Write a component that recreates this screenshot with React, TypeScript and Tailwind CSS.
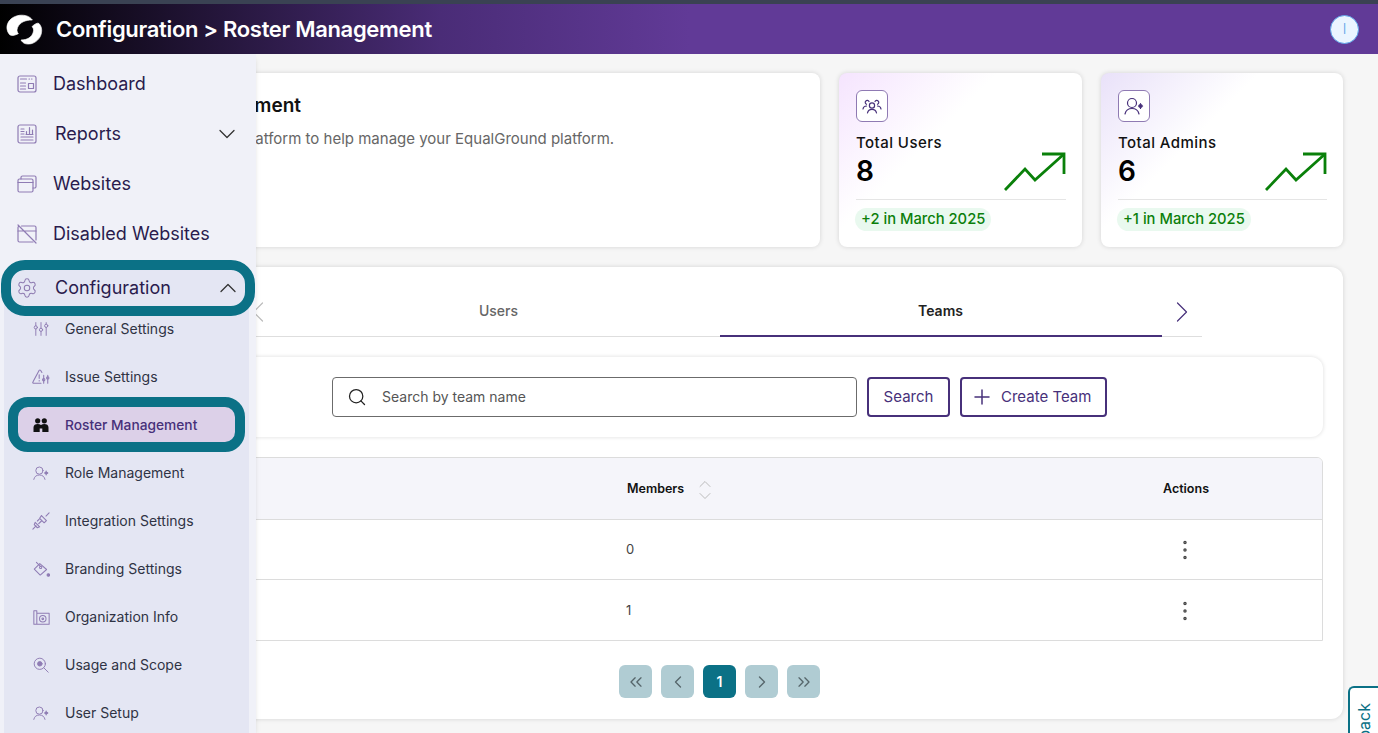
import { ChevronDown, ChevronLeft, ChevronRight, ChevronUp, ChevronsLeft, ChevronsRight, EllipsisVertical, Plus, Search, Settings } from "lucide-react";
import type { ReactNode } from "react";

function Ico({ size = 20, children, className = "text-[#8f7cb4]" }: { size?: number; children: ReactNode; className?: string }) {
  return (
    <svg width={size} height={size} viewBox="0 0 20 20" fill="none" stroke="currentColor" strokeWidth="1.2" strokeLinecap="round" strokeLinejoin="round" className={`shrink-0 ${className}`}>
      {children}
    </svg>
  );
}

const DashboardIcon = () => (
  <Ico>
    <rect x="1" y="2" width="18" height="16" rx="2" />
    <path d="M3.500 5h6M12 5h.5M14.500 5h.5M3.500 9h5M3.500 12h5M3.500 15h5" />
    <rect x="11.500" y="9.500" width="5" height="5" />
  </Ico>
);
const ReportsIcon = () => (
  <Ico>
    <rect x="1" y="1" width="18" height="18" rx="2" />
    <path d="M4 5h3M4 7.500h3M4 10h3M4 13h12M4 16h12M9.500 10.500V7.500M12.500 10.500V3.500M15.500 10.500V6M9 10.500h7" />
  </Ico>
);
const WebsitesIcon = () => (
  <Ico>
    <path d="M4 5V3.500A1.500 1.500 0 0 1 5.500 2h12A1.500 1.500 0 0 1 19 3.500v9a1.500 1.500 0 0 1-1.500 1.500H16" />
    <rect x="1" y="5" width="15" height="13" rx="1.500" />
    <path d="M1 8.500h15" />
  </Ico>
);
const DisabledIcon = () => (
  <Ico>
    <path d="M4.500 2H17.500A1.500 1.500 0 0 1 19 3.500V16M1.500 2.500A1.500 1.500 0 0 0 1 3.500v13A1.500 1.500 0 0 0 2.500 18H16" />
    <path d="M1 7h18M1 1l18 18" />
  </Ico>
);
const SlidersIcon = () => (
  <Ico size={16}>
    <path d="M3.500 2v4M3.500 10v8M10 2v7M10 13v5M16.500 2v2M16.500 8v10" />
    <circle cx="3.500" cy="8" r="2" />
    <circle cx="10" cy="11" r="2" />
    <circle cx="16.500" cy="6" r="2" />
  </Ico>
);
const IssueIcon = () => (
  <Ico size={18}>
    <path d="M11 5 9.500 2.500a1 1 0 0 0-1.500 0L1 15.500a1 1 0 0 0 1 1.500h8" />
    <path d="M8 7.500v4M8 14v.5M13 8v9M17.500 8v9" />
    <circle cx="13" cy="13" r="1.300" />
    <circle cx="17.500" cy="11" r="1.300" />
  </Ico>
);
const RoleIcon = ({ size = 16, className }: { size?: number; className?: string }) => (
  <Ico size={size} className={className}>
    <circle cx="8" cy="7" r="4.500" />
    <path d="M1 18c.8-3.500 3-5.500 7-5.500s6.200 2 7 5.500" />
    <circle cx="16.500" cy="10" r="1.500" fill="currentColor" />
    <path d="M16.500 7.500v.5M16.500 12v.5M14.500 10h.3M18.300 10h.3" />
  </Ico>
);
const PlugIcon = () => (
  <Ico size={18}>
    <path d="M1 19l3.500-3.500M19 1l-3.500 3.500" />
    <path d="M3.500 11.500 8.500 16.500 6 17.500 2.500 14 3.500 11.500ZM10.500 4 16 9.500M8.500 7l5 5M10.500 4l-2 3M16 9.500l-2.500 2.500" />
    <path d="M10.500 10l-3 3M8 8l-2 2" />
  </Ico>
);
const BucketIcon = () => (
  <Ico size={17}>
    <path d="M8 3 1.500 9.500l7 7L16 10 8 3Z" />
    <path d="M4 1.500l5 5" />
    <circle cx="9" cy="7.500" r="1.300" />
    <circle cx="18" cy="16.500" r="1.500" fill="currentColor" />
  </Ico>
);
const OrgIcon = () => (
  <Ico size={17}>
    <path d="M1 18V2h3.500v3H19v13H1ZM4.500 5v13" />
    <circle cx="11.500" cy="11.500" r="3.800" />
    <circle cx="11.500" cy="11.500" r="1" />
  </Ico>
);
const ScopeIcon = () => (
  <Ico size={16}>
    <circle cx="8.500" cy="8.500" r="7" />
    <circle cx="8.500" cy="8.500" r="2.800" fill="currentColor" />
    <path d="M13.500 13.500 19 19" />
  </Ico>
);
const UsersIcon = () => (
  <Ico size={20} className="text-[#47307a]">
    <circle cx="10" cy="9.500" r="2.600" />
    <path d="M5.500 17c.5-2.500 2-3.700 4.500-3.700s4 1.200 4.500 3.700M7 5.500A2 2 0 1 0 4.500 8.300M13 5.500a2 2 0 1 1 2.500 2.800M1 13c.3-2 1.500-3 3.500-3M19 13c-.3-2-1.500-3-3.500-3" />
  </Ico>
);
const RosterIcon = () => (
  <svg width="16" height="16" viewBox="0 0 16 16" fill="#111" className="shrink-0">
    <circle cx="4.700" cy="3.800" r="2.600" />
    <circle cx="11.300" cy="3.800" r="2.600" />
    <path d="M.500 15v-4.500C.500 8 2.300 7 4.700 7c1.300 0 2.400.3 3.300 1 .9-.7 2-1 3.300-1 2.400 0 4.200 1 4.200 3.500V15H9.300v-3.500H6.700V15H.500Z" />
  </svg>
);

const subItems = [
  { label: "General Settings", icon: <SlidersIcon /> },
  { label: "Issue Settings", icon: <IssueIcon /> },
  { label: "Roster Management", icon: <RosterIcon />, active: true },
  { label: "Role Management", icon: <RoleIcon /> },
  { label: "Integration Settings", icon: <PlugIcon /> },
  { label: "Branding Settings", icon: <BucketIcon /> },
  { label: "Organization Info", icon: <OrgIcon /> },
  { label: "Usage and Scope", icon: <ScopeIcon /> },
  { label: "User Setup", icon: <RoleIcon /> },
];

function Sidebar() {
  return (
    <aside className="absolute top-0 bottom-0 left-0 z-20 w-64 overflow-hidden bg-[#f0f1f8] pt-[5px] shadow-md">
      <div className="flex h-[50px] items-center gap-4 pl-[17px] text-lg text-[#2a1b4d]">
        <DashboardIcon />
        Dashboard
      </div>
      <div className="flex h-[50px] items-center pl-[17px] pr-[15px] text-lg text-[#2a1b4d]">
        <ReportsIcon />
        <span className="ml-[18px] flex-1">Reports</span>
        <ChevronDown size={28} strokeWidth={1.1} className="text-[#333]" />
      </div>
      <div className="flex h-[50px] items-center gap-4 pl-[17px] text-lg text-[#2a1b4d]">
        <WebsitesIcon />
        Websites
      </div>
      <div className="flex h-[50px] items-center gap-4 pl-[17px] text-lg text-[#2a1b4d]">
        <DisabledIcon />
        Disabled Websites
      </div>
      <div className="relative z-10 mx-px mt-px flex h-14 w-[254px] items-center rounded-[24px] border-[10px] border-[#0b7186] bg-[#e4e6f3] pl-[5px] pr-[3px] text-lg text-[#2a1b4d]">
        <Settings size={22} strokeWidth={1.1} className="text-[#8d7ab0]" />
        <span className="ml-[17px] flex-1">Configuration</span>
        <ChevronUp size={28} strokeWidth={1.1} className="text-[#333]" />
      </div>
      <div className="mx-1 -mt-[11px] h-[480px] w-[245px] bg-[#e4e6f3]">
        {subItems.map((item) =>
          item.active ? (
            <div key={item.label} className="flex h-12 items-center">
              <div className="relative z-10 ml-1 flex h-[55px] w-[237px] shrink-0 -translate-y-px items-center rounded-[20px] border-[10px] border-[#0b7186] bg-[#dcd0e8] pt-0.5 pl-[15px] text-[13.75px] font-medium text-[#47307a]">
                <RosterIcon />
                <span className="ml-4">{item.label}</span>
              </div>
            </div>
          ) : (
            <div key={item.label} className="flex h-12 items-center pl-[29px] text-sm text-[#2f3344]">
              <span className="flex w-4 justify-center">{item.icon}</span>
              <span className="ml-4">{item.label}</span>
            </div>
          ),
        )}
      </div>
    </aside>
  );
}

function TrendArrow() {
  return (
    <svg width="62" height="40" viewBox="0 0 62 40" fill="none" stroke="#0a800a" strokeWidth="2.800" className="shrink-0">
      <path d="M1 38 21 17l10 11L60 2" />
      <path d="M38 2h22v20" />
    </svg>
  );
}

function StatCard({ label, value, change, icon, gradient, width }: { label: string; value: string; change: string; icon: ReactNode; gradient: string; width: string }) {
  return (
    <div className={`rounded-lg bg-white pt-[17px] pr-4 pl-[17px] shadow-[0_0_5px_rgba(0,0,0,0.14)] ${width} ${gradient}`}>
      <div className="flex h-8 w-8 items-center justify-center rounded-md border border-[#8f7ab3] bg-white">{icon}</div>
      <div className="flex h-[78px] justify-between border-b border-[#e5e5e5]">
        <div>
          <div className="mt-[10px] text-[15px] font-medium tracking-[0.45px] text-[#111]">{label}</div>
          <div className="-mt-0.5 text-[28px] leading-9 font-semibold text-black">{value}</div>
        </div>
        <div className="self-end pb-[7px]">
          <TrendArrow />
        </div>
      </div>
      <div className="mt-2 -ml-px inline-block rounded-full bg-[#e9f9ef] px-1.5 text-[14.75px] leading-[23px] font-medium text-[#0b7f0b]">{change}</div>
    </div>
  );
}

function PageButton({ children, active = false }: { children: ReactNode; active?: boolean }) {
  return (
    <div className={`flex h-[33px] w-[33px] items-center justify-center rounded-md text-sm font-semibold ${active ? "bg-[#0b7186] text-white" : "bg-[#b0ccd3] text-[#56666b]"}`}>
      {children}
    </div>
  );
}

function Row({ count, height }: { count: string; height: string }) {
  return (
    <div className={`grid grid-cols-[498px_1fr_274px] items-center border-t border-[#dcdcdc] text-[13px] text-[#444] ${height}`}>
      <div />
      <div className="px-[11px]">{count}</div>
      <div className="flex justify-center">
        <EllipsisVertical size={26} strokeWidth={1.2} className="text-[#444]" />
      </div>
    </div>
  );
}

export default function App() {
  return (
    <div className="flex h-screen flex-col overflow-hidden bg-[#f6f6f6] font-['Inter',sans-serif]">
      <div className="h-1 bg-[#3a4253]" />
      <header className="flex h-[50px] items-center bg-[linear-gradient(90deg,#000_0%,#4a2c77_32%,#613a97_50%,#613a97_100%)] pr-[19px]">
        <svg width="50" height="44" viewBox="0 0 150 132" fill="#fff" stroke="#fff" strokeWidth="2" strokeLinejoin="round" className="mt-0.5 shrink-0">
          <path d="M29 80C12 60 22 28 58 22c17-2 32 3 39 14-22 0-37 7-44 22-3 8-3 13 2 19-12 6-21 7-26 3Z" />
          <path d="M116 46c17 15 10 52-22 61-15 3-25 0-31-11 18 0 33-8 37-24 2-8 0-12-4-16 7-7 15-12 20-10Z" />
        </svg>
        <h1 className="ml-1.5 flex-1 text-[22px] font-semibold tracking-[-0.32px] text-white">Configuration &gt; Roster Management</h1>
        <div className="flex h-[29px] w-[29px] items-center justify-center rounded-full border border-[#5ba3e8] bg-[#ebf5ff] text-sm font-light text-[#5ba3e8]">I</div>
      </header>

      <div className="relative flex-1">
        <Sidebar />
        <main className="flex flex-col gap-5 pt-[19px] pr-[35px] pl-24">
          <div className="flex gap-[19px]">
            <div className="h-[174px] flex-1 rounded-lg bg-white p-5 shadow-[0_0_5px_rgba(0,0,0,0.14)]">
              <h2 className="mt-px text-[19px] leading-6 font-semibold text-[#111]">Roster Management</h2>
              <p className="mt-2.5 ml-[21px] text-[15px] text-[#666]">Use our roster platform to help manage your EqualGround platform.</p>
            </div>
            <StatCard width="w-[243px]" label="Total Users" value="8" change="+2 in March 2025" gradient="bg-[linear-gradient(135deg,#f5e4fe_0%,#ffffff_38%)]" icon={<UsersIcon />} />
            <StatCard width="w-[242px]" label="Total Admins" value="6" change="+1 in March 2025" gradient="bg-[linear-gradient(135deg,#e9e1f9_0%,#ffffff_38%)]" icon={<RoleIcon size={20} className="text-[#47307a]" />} />
          </div>

          <section className="h-[452px] rounded-xl bg-white px-5 pt-5 shadow-[0_0_5px_rgba(0,0,0,0.14)]">
            <div className="mx-auto flex h-[50px] w-[964px] border-b border-[#dedede]">
              <div className="flex w-10 items-center justify-center">
                <ChevronLeft size={36} strokeWidth={0.8} className="shrink-0 text-[#bbb]" />
              </div>
              <div className="flex w-[442px] items-center justify-center pb-0.5 text-sm font-medium text-[#666]">Users</div>
              <div className="-mb-px flex w-[442px] items-center justify-center border-b-2 border-[#47307a] text-sm font-semibold text-[#222]">Teams</div>
              <div className="flex w-10 items-center justify-center">
                <ChevronRight size={36} strokeWidth={0.8} className="shrink-0 text-[#47307a]" />
              </div>
            </div>

            <div className="mt-5 flex h-20 items-center justify-center gap-2.5 rounded-xl shadow-[0_0_4px_rgba(0,0,0,0.14)]">
              <div className="flex h-10 w-[525px] items-center rounded border border-[#6b6b6b] pl-3.5 text-sm text-[#555]">
                <Search size={20} strokeWidth={1.5} className="text-[#222]" />
                <span className="ml-[15px]">Search by team name</span>
              </div>
              <div className="flex h-10 w-[83px] items-center justify-center rounded border-2 border-[#47307a] text-[15px] text-[#47307a]">Search</div>
              <div className="flex h-10 w-[147px] items-center gap-[7px] rounded border-2 border-[#47307a] pl-2 text-[15px] text-[#47307a]">
                <Plus size={24} strokeWidth={1.5} />
                Create Team
              </div>
            </div>

            <div className="mt-5 overflow-hidden rounded-t-md border border-[#dcdcdc]">
              <div className="grid h-[61px] grid-cols-[498px_1fr_274px] items-center bg-[#f5f5fa] pt-0.5 text-[12.5px] font-semibold text-[#111]">
                <div />
                <div className="flex items-center gap-[11px] px-3">
                  Members
                  <span className="flex flex-col text-[#b5b5b5]">
                    <ChevronUp size={20} strokeWidth={1.1} className="-mb-2" />
                    <ChevronDown size={20} strokeWidth={1.1} />
                  </span>
                </div>
                <div className="pl-0.5 text-center">Actions</div>
              </div>
              <Row count="0" height="h-[60px]" />
              <Row count="1" height="h-[61px] pt-0.5" />
            </div>

            <div className="mt-6 flex justify-center gap-[9px]">
              <PageButton><ChevronsLeft size={20} strokeWidth={1.6} /></PageButton>
              <PageButton><ChevronLeft size={20} strokeWidth={1.6} /></PageButton>
              <PageButton active>1</PageButton>
              <PageButton><ChevronRight size={20} strokeWidth={1.6} /></PageButton>
              <PageButton><ChevronsRight size={20} strokeWidth={1.6} /></PageButton>
            </div>
          </section>
        </main>
        <div className="absolute top-[632px] right-0 flex h-[110px] w-[30px] justify-center rounded-tl-md border-t-2 border-l-2 border-[#0b7186] bg-white pt-[15px]">
          <span className="rotate-180 self-start text-[16px] leading-none text-[#0b7186] [writing-mode:vertical-rl]">Feedback</span>
        </div>
      </div>
    </div>
  );
}
